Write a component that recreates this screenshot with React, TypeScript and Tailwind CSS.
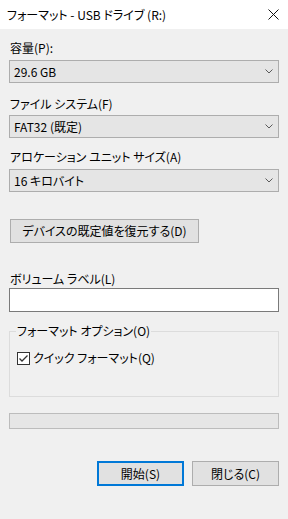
import React from 'react';

const font = "font-['Noto_Sans_CJK_JP','Noto_Sans',sans-serif] [font-feature-settings:'palt']";

function Chevron() {
  return (
    <svg width="8" height="5" viewBox="0 0 8 5" className="shrink-0">
      <path d="M0.5 0.5 L4 4 L7.5 0.5" fill="none" stroke="#5a5a5a" strokeWidth="1" />
    </svg>
  );
}

function Combo({ value }: { value: string }) {
  return (
    <div className="h-[23px] w-full bg-[#e5e5e5] border border-[#adadad] flex items-center justify-between pl-[4px] pr-[5px] text-[12px] leading-[16px] text-black">
      <span>{value}</span>
      <Chevron />
    </div>
  );
}

export default function App() {
  return (
    <div className={`w-[288px] h-[519px] flex flex-col bg-[#f0f0f0] text-black ${font}`}>
      {/* title bar */}
      <div className="h-[29px] bg-white flex items-center justify-between pl-[7px] pr-[9px] shrink-0">
        <span className="text-[12px] leading-[16px]">フォーマット - USB ドライブ (R:)</span>
        <svg width="11" height="11" viewBox="0 0 11 11">
          <path d="M0.5 0.5 L10.5 10.5 M10.5 0.5 L0.5 10.5" stroke="#111" strokeWidth="1" />
        </svg>
      </div>

      <div className="flex flex-col px-[9px] text-[12px] leading-[16px]">
        <div className="mt-[11px] pl-[1px]">容量(P):</div>
        <div className="mt-[4px]"><Combo value="29.6 GB" /></div>

        <div className="mt-[13px] pl-[1px]">ファイル システム(F)</div>
        <div className="mt-[3px]"><Combo value="FAT32 (既定)" /></div>

        <div className="mt-[11px] pl-[1px]">アロケーション ユニット サイズ(A)</div>
        <div className="mt-[4px]"><Combo value="16 キロバイト" /></div>

        <button className="mt-[27px] ml-[1px] w-[189px] h-[24px] bg-[#e1e1e1] border border-[#adadad] flex items-center justify-center">
          デバイスの既定値を復元する(D)
        </button>

        <div className="mt-[28px] pl-[1px]">ボリューム ラベル(L)</div>
        <div className="mt-[1px] h-[24px] w-full bg-white border border-[#7a7a7a]" />

        <fieldset className="mt-[11px] h-[74px] border border-[#dcdcdc] px-[7px]">
          <legend className="ml-[-1px] px-[1px]">フォーマット オプション(O)</legend>
          <label className="mt-[11px] flex items-center gap-[3px]">
            <span className="w-[13px] h-[13px] border border-[#333] bg-white flex items-center justify-center">
              <svg width="11" height="11" viewBox="0 0 11 11">
                <path d="M1.5 5.5 L4 8 L9.5 2.5" fill="none" stroke="#333" strokeWidth="1.3" />
              </svg>
            </span>
            <span>クイック フォーマット(Q)</span>
          </label>
        </fieldset>

        <div className="mt-[16px] h-[16px] w-full bg-[#e6e6e6] border border-[#bcbcbc]" />

        <div className="mt-[32px] flex justify-end gap-[8px]">
          <button className="w-[87px] h-[25px] bg-[#e1e1e1] border-2 border-[#0078d7] flex items-center justify-center">
            開始(S)
          </button>
          <button className="w-[87px] h-[25px] bg-[#e1e1e1] border border-[#adadad] flex items-center justify-center">
            閉じる(C)
          </button>
        </div>
      </div>
    </div>
  );
}
